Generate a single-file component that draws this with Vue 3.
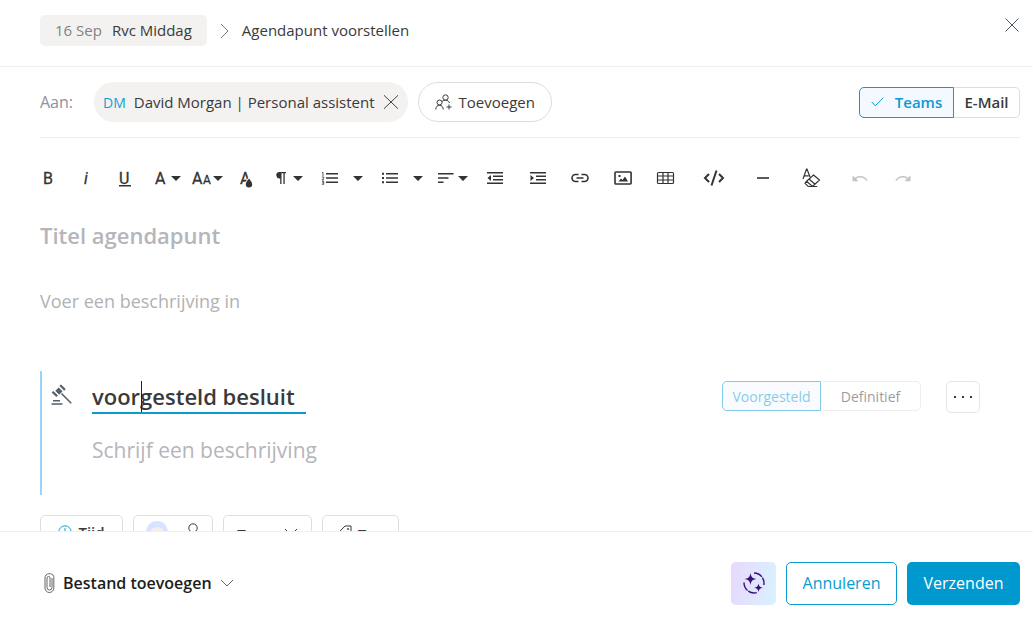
<script setup>
import { ref } from 'vue'

const title = ref('')
const description = ref('')
const decision = ref('voorgesteld besluit')
const decisionText = ref('')

const caret = (x) => `M${x - 5} 10h10l-5 5z`

const tools = [
  { label: 'Vet', w: 39, texts: [{ t: 'B', x: 15 }] },
  { label: 'Cursief', w: 38, texts: [{ t: 'i', x: 17, italic: true }] },
  { label: 'Onderstrepen', w: 39, texts: [{ t: 'U', x: 14 }], fill: 'M14 19h12v1.500h-12z' },
  { label: 'Lettertype', w: 44, texts: [{ t: 'A', x: 11 }], fill: caret(32) },
  { label: 'Tekengrootte', w: 40, texts: [{ t: 'A', x: 4 }, { t: 'A', x: 15, small: true }], fill: caret(30) },
  { label: 'Tekstkleur', w: 36, texts: [{ t: 'A', x: 12 }], halo: 'M21 12.500c-2 2.800-3.200 4.200-3.200 5.700a3.200 3.200 0 0 0 6.400 0c0-1.500-1.200-2.900-3.200-5.700z', fill: 'M21 12.500c-2 2.800-3.200 4.200-3.200 5.700a3.200 3.200 0 0 0 6.400 0c0-1.500-1.200-2.900-3.200-5.700z' },
  { label: 'Alinea', w: 45, fill: 'M15 6H22v1.300h-1.300V18h-1.300V7.300h-1.900V18h-1.300v-5.500a3.250 3.250 0 0 1-1.200-6.500z' + caret(34) },
  { label: 'Genummerde lijst', w: 60, fill: 'M17 7h12v1.500H17zM17 11.300h12v1.500H17zM17 15.600h12v1.500H17z' + caret(49), thin: 'M13 6.500h1v3.500M12.800 11h2v1l-1.800 1.800h2M12.800 15.300h1.900v3h-1.900M13.200 16.800h1.400' },
  { label: 'Opsomming', w: 60, fill: 'M17 7h12v1.500H17zM17 11.300h12v1.500H17zM17 15.600h12v1.500H17zM13 6.800h2v2h-2zM13 11h2v2h-2zM13 15.300h2v2h-2z' + caret(49) },
  { label: 'Uitlijnen', w: 45, fill: 'M9 7h15.500v1.500H9zM9 11.300h10.500v1.500H9zM9 15.600h5.500v1.500H9z' + caret(34) },
  { label: 'Inspringing verkleinen', w: 42, fill: 'M13 6h16v1.500H13zM19 9.500h10V11H19zM19 13h10v1.500H19zM13 16.500h16V18H13zM17 9v6l-3.500-3z' },
  { label: 'Inspringing vergroten', w: 43, fill: 'M14 6h16v1.500h-16zM20 9.500h10V11h-10zM20 13h10v1.500h-10zM14 16.500h16V18h-16zM14.500 9v6l3.500-3z' },
  { label: 'Link invoegen', w: 42, link: 'M19.500 8.500h-3a3.500 3.500 0 0 0 0 7h3M22.500 8.500h3a3.500 3.500 0 0 1 0 7h-3M17.500 12h7' },
  { label: 'Afbeelding invoegen', w: 43, link: 'M14.800 6h14.500a.8.8 0 0 1 .8.8v10.400a.8.8 0 0 1-.8.8H14.800a.8.8 0 0 1-.8-.8V6.800a.8.8 0 0 1 .8-.8z', fill: 'M17.500 15.500l2.500-3 1.500 1.500 2.500-3.500 3 5zM17.500 9h2v2h-2z' },
  { label: 'Tabel invoegen', w: 43, middle: 'M14.500 6.500h14a1 1 0 0 1 1 1v9a1 1 0 0 1-1 1h-14a1 1 0 0 1-1-1v-9a1 1 0 0 1 1-1zM13.500 10h16M13.500 14h16M19 6.500v11M24 6.500v11' },
  { label: 'Codeweergave', w: 52, stroke: 'M22 8l-4 4 4 4M32 8l4 4-4 4M29.500 4.500l-5 15' },
  { label: 'Horizontale lijn', w: 48, fill: 'M18 11.200h12v1.600H18z' },
  { label: 'Opmaak wissen', w: 48, middle: 'M16 13l3.500-10h.5l3 8M17.200 9.800h4.500M26.500 9l6 5-7 6.500-6-5.200zM22 13l6 5.200M19.500 15.300l-1.500 2 3.200 3.200h9' },
  { label: 'Ongedaan maken', w: 50, off: true, fill: 'M17.500 9.300v6h6l-2.300-2.300c1.300-1 2.500-1.400 4-1.400 2.700 0 5 1.200 6.300 3.400l1.200-.6c-1.500-2.700-4.300-4.300-7.500-4.300-2 0-3.800.6-5.300 1.700z' },
  { label: 'Opnieuw', w: 36, off: true, fill: 'M25.500 9.300v6h-6l2.300-2.300c-1.300-1-2.500-1.400-4-1.400-2.700 0-5 1.200-6.300 3.400l-1.200-.6c1.500-2.700 4.300-4.300 7.500-4.300 2 0 3.800.6 5.300 1.700z' },
]
</script>

<template>
  <main class="dialog">
    <header class="head">
      <a href="#" class="meeting"><span class="date">16 Sep</span>Rvc Middag</a>
      <svg class="crumb" width="10" height="16" viewBox="0 0 10 16"><path d="M1 1l7 7-7 7" /></svg>
      <h1>Agendapunt voorstellen</h1>
      <button class="close" type="button" aria-label="Sluiten">
        <svg width="14" height="14" viewBox="0 0 14 14"><path d="M.5.5l13 13M13.500.5l-13 13" /></svg>
      </button>
    </header>

    <section class="recipients">
      <span class="to">Aan:</span>
      <div class="person">
        <span class="initials">DM</span>
        <span>David Morgan | Personal assistent</span>
        <button type="button" aria-label="Verwijderen">
          <svg width="16" height="14" viewBox="0 0 16 14"><path d="M1 .3l14 13.400M15 .3l-14 13.400" /></svg>
        </button>
      </div>
      <button class="add" type="button">
        <svg width="17" height="16" viewBox="0 0 17 16">
          <circle cx="10.500" cy="3.500" r="2.700" /><circle cx="4.500" cy="8.500" r="2.500" />
          <path d="M.8 15.500c0-2.600 1.500-4.300 3.700-4.300s3.700 1.700 3.700 4.300M7 7.500c.8-.8 2-1.300 3.500-1.300 2 0 3.400 1 4 2.800M14 10.500v5M11.500 13h5" />
        </svg>
        Toevoegen
      </button>
      <div class="segment channel">
        <button class="on" type="button">
          <svg width="13" height="10" viewBox="0 0 13 10"><path d="M.7 5l3.600 3.800L12.300.8" /></svg>Teams
        </button>
        <button type="button">E-Mail</button>
      </div>
    </section>

    <section class="content">
      <div class="toolbar" role="toolbar" aria-label="Opmaak">
        <button v-for="tool in tools" :key="tool.label" type="button" :aria-label="tool.label" :class="{ off: tool.off }">
          <svg :width="tool.w" height="24" :viewBox="`0 0 ${tool.w} 24`">
            <text v-for="(g, i) in tool.texts" :key="i" :x="g.x" y="18" :class="{ italic: g.italic, small: g.small }">{{ g.t }}</text>
            <path v-if="tool.halo" class="halo" :d="tool.halo" />
            <path v-if="tool.fill" :d="tool.fill" />
            <path v-if="tool.stroke" class="stroke" :d="tool.stroke" />
            <path v-if="tool.link" class="stroke link" :d="tool.link" />
            <path v-if="tool.middle" class="middle" :d="tool.middle" />
            <path v-if="tool.thin" class="thin" :d="tool.thin" />
          </svg>
        </button>
      </div>

      <input v-model="title" class="title" aria-label="Titel agendapunt" placeholder="Titel agendapunt">
      <textarea v-model="description" class="description" rows="1" aria-label="Beschrijving" placeholder="Voer een beschrijving in"></textarea>

      <article class="decision">
        <svg class="gavel" width="22" height="22" viewBox="0 0 22 22">
          <path class="solid" d="M8.300 1.800L10 .4l4.700 4.700-1.500 1.600zM.7 8.400l1.600-1.500L7 11.500 5.300 13zM7.700 3.500l3.800 3.800-3.300 3.400-3.900-3.900z" />
          <path class="handle" d="M10.500 9.500l9.700 9.700M2 16.800h7M.5 20h11" />
        </svg>
        <div class="texts">
          <div class="name">
            <input v-model="decision" aria-label="Besluit">
            <i class="cursor"></i>
          </div>
          <textarea v-model="decisionText" rows="1" aria-label="Beschrijving besluit" placeholder="Schrijf een beschrijving"></textarea>
        </div>
        <div class="segment state">
          <button class="on" type="button">Voorgesteld</button>
          <button type="button">Definitief</button>
        </div>
        <button class="more" type="button" aria-label="Meer">
          <svg width="18" height="4" viewBox="0 0 18 4"><path d="M0 1h2v2H0zM8 1h2v2H8zM16 1h2v2h-2z" /></svg>
        </button>
      </article>

      <div class="chips">
        <button class="time" type="button">
          <svg width="14" height="14" viewBox="0 0 14 14"><circle cx="7" cy="7" r="6.200" /><path d="M7 3v4.500h3" /></svg>Tijd
        </button>
        <button class="owner" type="button" aria-label="Eigenaar">
          <svg width="22" height="22" viewBox="0 0 22 22"><circle class="blue" cx="11" cy="11" r="11" /><circle class="sand" cx="11" cy="13" r="7" /></svg>
          <svg width="14" height="18" viewBox="0 0 14 18"><circle cx="7" cy="5" r="4.200" /><path d="M1 17c0-4 2-7 6-7s6 3 6 7" /></svg>
        </button>
        <button class="kind" type="button">
          Type<svg width="14" height="12" viewBox="0 0 14 12"><path d="M1 1l6 6 6-6" /></svg>
        </button>
        <button class="tag" type="button">
          <svg width="14" height="18" viewBox="0 0 14 18"><path d="M7 1h6v6l-6.500 6.300L.7 7.500z" /><circle cx="10" cy="4" r=".6" /></svg>Tag
        </button>
      </div>
    </section>

    <footer class="foot">
      <button class="attach" type="button">
        <svg width="11" height="20" viewBox="0 0 11 20"><path d="M8 5v9.500a2.500 2.500 0 0 1-5 0V5a1.500 1.500 0 0 1 3 0v9M1 4.800v10.300a4.300 4.300 0 0 0 8.800 0V4.500a3.500 3.500 0 0 0-3.500-3.700H4.800A3.800 3.800 0 0 0 1 4.800z" /></svg>
        Bestand toevoegen
        <svg width="14" height="8" viewBox="0 0 14 8"><path d="M1 1l6 6 6-6" /></svg>
      </button>
      <button class="ai" type="button" aria-label="AI-assistent">
        <svg width="22" height="22" viewBox="0 0 22 22">
          <path d="M7.500 1c.7 4.200 1.800 5.300 6 6-4.200.7-5.300 1.800-6 6-.7-4.200-1.800-5.300-6-6 4.200-.7 5.300-1.800 6-6zM15.500 11.500c.5 2.900 1.400 3.800 4.300 4.300-2.900.5-3.800 1.400-4.300 4.300-.5-2.900-1.400-3.800-4.300-4.300 2.900-.5 3.800-1.400 4.300-4.300z" />
          <path class="ring" d="M11 1c5.500 0 10 4.500 10 10 0 .8-.1 1.400-.2 2" />
          <path class="ring" d="M1 10.500C1 16.500 5.500 21 11 21c1 0 2-.2 2.800-.4" />
        </svg>
      </button>
      <button class="cancel" type="button">Annuleren</button>
      <button class="send" type="button">Verzenden</button>
    </footer>
  </main>
</template>

<style>
body { background: #fff; }
</style>

<style scoped>
.dialog {
  display: flex;
  flex-direction: column;
  height: 100vh;
  font-family: "Open Sans", sans-serif;
  font-size: 15px;
  color: #3a3a3a;
}
.dialog *, .dialog { box-sizing: border-box; }
button, input, textarea { font: inherit; color: inherit; background: none; border: 0; padding: 0; margin: 0; outline: 0; }
button { display: flex; align-items: center; justify-content: center; white-space: nowrap; }
svg { display: block; flex: none; fill: none; stroke: currentColor; }
a { color: inherit; text-decoration: none; }

.head { display: flex; align-items: flex-start; flex: none; padding: 15px 11px 20px 40px; line-height: 31px; border-bottom: 1px solid #efefef; }
.meeting { padding: 0 15px; background: #f3f2f0; border-radius: 5px; }
.date { margin-right: 10px; color: #7f8287; }
.crumb { margin: 8px 12px 0 13px; color: #737b86; }
h1 { margin: 0; font-size: 15px; font-weight: 400; }
.close { width: 20px; height: 20px; margin-left: auto; color: #4c5963; }

.recipients { display: flex; align-items: center; flex: none; margin: 0 13px 0 40px; padding: 15px 0; border-bottom: 1px solid #efefef; }
.to { width: 54px; font-size: 16px; color: #8b93a0; }
.person { display: flex; align-items: center; gap: 8px; height: 40px; padding: 0 9px; background: #f3f2f0; border-radius: 20px; }
.initials { color: #129fd2; font-size: 14px; }
.person button { color: #444; }
.add { gap: 7px; height: 40px; margin-left: 10px; padding: 0 16px; border: 1px solid #ddd; border-radius: 20px; }
.segment { display: flex; }
.segment button { border: 1px solid #ddd; border-left: 0; border-radius: 0 5px 5px 0; }
.segment .on { color: #0a9bd0; background: #f4f8ff; border: 1px solid #0a9bd0; border-radius: 5px 0 0 5px; }
.channel { margin-left: auto; font-weight: 600; }
.channel button { width: 66px; height: 31px; }
.channel .on { gap: 11px; width: 95px; }

.content { flex: 1; min-height: 0; overflow: hidden; }
.toolbar { display: flex; margin: 28px 0 0 28px; color: #333; }
.toolbar svg { fill: currentColor; stroke: none; }
.toolbar text { font: 400 16px Roboto, sans-serif; stroke: currentColor; stroke-width: .3; }
.toolbar .italic { font-style: italic; }
.toolbar .small { font-size: 12px; }
.toolbar .halo { fill: #fff; stroke: #fff; stroke-width: 2; }
.toolbar .stroke { fill: none; stroke: currentColor; stroke-width: 2; }
.toolbar .link { stroke-width: 1.6; }
.toolbar .middle { fill: none; stroke: currentColor; stroke-width: 1.2; }
.toolbar .thin { fill: none; stroke: currentColor; stroke-width: .8; }
.toolbar .off { color: #c4c4c4; }

input, textarea { display: block; resize: none; overflow: hidden; }
::placeholder { color: #b5b5bb; opacity: 1; }
.title { width: 90%; height: 30px; margin: 30px 0 0 40px; font-size: 22px; font-weight: 600; }
.description { width: 90%; height: 28px; margin: 37px 0 0 40px; font-size: 18px; line-height: 28px; }
.description::placeholder { color: #b2b2b2; }

.decision { display: flex; align-items: flex-start; height: 124px; margin: 56px 53px 0 40px; padding: 10px 0 0 9px; border-left: 2px solid #9bd3fb; }
.gavel { margin-top: 3px; color: #55606a; }
.gavel .solid { fill: currentColor; stroke: none; }
.gavel .handle { stroke-width: 1.600; }
.texts { flex: 1; margin-left: 19px; font-size: 21px; }
.name { position: relative; width: 214px; border-bottom: 2px solid #0a9bd0; }
.name input { width: 100%; height: 31px; padding-bottom: 2px; font-size: 22px; font-weight: 600; }
.cursor { position: absolute; top: 0; left: 49px; width: 1px; height: 31px; background: #222; }
.texts textarea { width: 100%; height: 32px; margin-top: 20px; line-height: 32px; }
.state { font-size: 14px; opacity: .5; }
.state button { width: 100px; height: 30px; }
.state .on { width: 99px; }
.more { width: 34px; height: 32px; margin-left: 25px; border: 1px solid #e6e6e6; border-radius: 5px; }
.more svg { fill: #2d3a44; stroke: none; }

.chips { display: flex; gap: 10px; margin: 20px 0 0 40px; font-weight: 600; }
.chips button { height: 34px; border: 1px solid #dcdfe2; border-radius: 5px; }
.time { gap: 6px; width: 83px; }
.time svg { color: #129fd2; }
.owner { gap: 18px; width: 80px; }
.owner .blue { fill: #d8e4ff; stroke: none; }
.owner .sand { fill: #f3efec; stroke: none; }
.chips .kind, .chips .tag { height: 37px; }
.kind { gap: 12px; width: 89px; }
.tag { gap: 6px; width: 77px; }

.foot { display: flex; flex: none; gap: 10px; padding: 30px 13px 22px 44px; border-top: 1px solid #efefef; font-size: 16px; background: #fff; }
.foot button { height: 43px; padding-bottom: 2px; border-radius: 5px; }
.foot .attach { gap: 8px; margin-right: auto; font-weight: 600; color: #1c1c1c; }
.attach svg { color: #666; }
.foot .ai { width: 45px; color: #3c0f78; background: linear-gradient(100deg, #e8d8fd, #d8f2ff); }
.ai svg { fill: currentColor; stroke: none; }
.ai .ring { fill: none; stroke: currentColor; stroke-width: 1.400; stroke-dasharray: 9 1; }
.foot .cancel { width: 111px; color: #0a9bd0; border: 1px solid #0a9bd0; }
.foot .send { width: 113px; color: #fff; background: #0099cf; }
</style>
